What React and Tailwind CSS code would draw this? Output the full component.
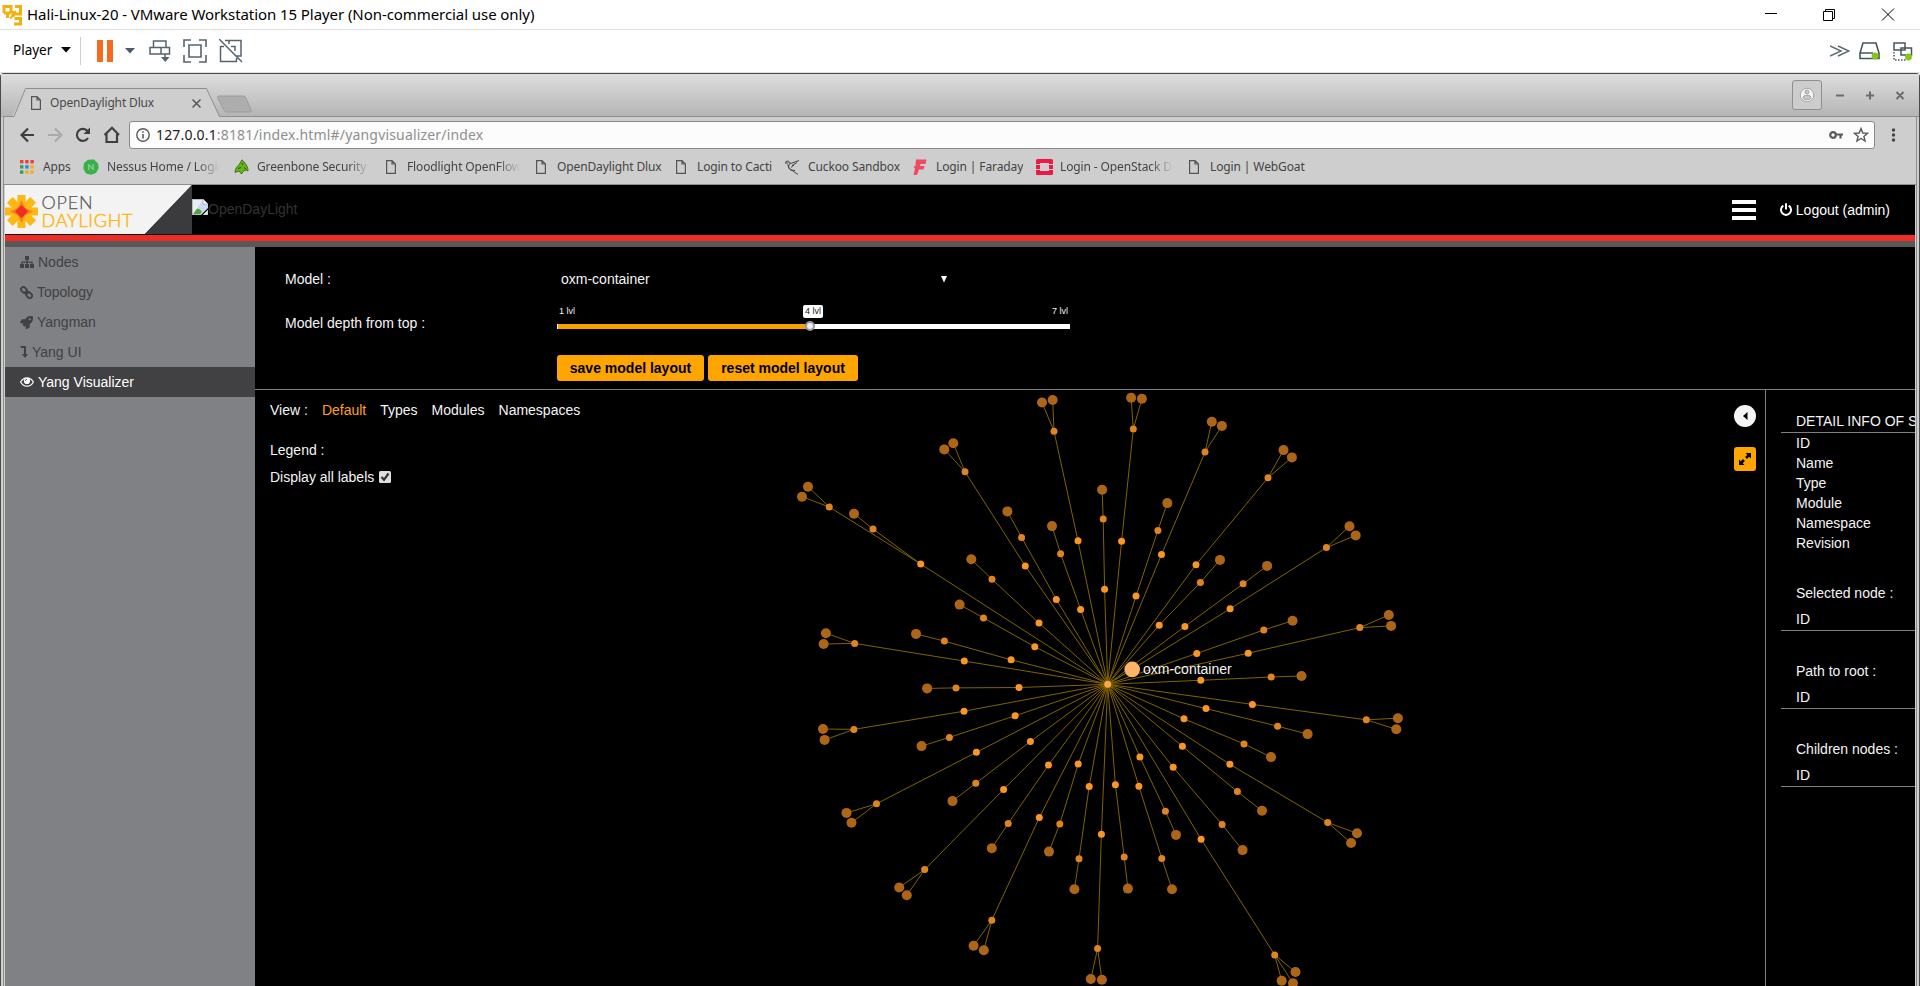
import React from "react";
import { FaRocket } from "react-icons/fa";

const ROOT = [1107.7, 684.3];

/* Each branch: first node, then sub-branches of [node, ...leaves]. */
const BRANCHES = [
  [[920.7, 564], [[829.3, 507], [808, 486.7], [802, 496.7]], [[873, 529], [854, 513.7]]],
  [[1025.3, 566], [[965, 471.8], [953.3, 443.3], [944.3, 449.4]]],
  [[1056.3, 599.4], [[1021.6, 537.4], [1007.4, 511.4]]],
  [[1039, 623], [[992, 579.3], [971.3, 559.3]]],
  [[1034.8, 646.7], [[983.5, 617.9], [959.6, 604.6]]],
  [[1011.1, 659.8], [[944.4, 641.1], [916, 633.9]]],
  [[964.3, 661.1], [[854.7, 643.4], [825.9, 633.2], [823.6, 644]]],
  [[1080.6, 609.4], [[1060.6, 553.8], [1052, 526.1]]],
  [[1078, 540.8], [[1054, 431.2], [1042, 402.5], [1052.7, 400]]],
  [[1104.6, 589.3], [[1103.2, 519.1], [1102.1, 489.8]]],
  [[1121.6, 541.2], [[1133.3, 429.1], [1131.1, 397.8], [1141.9, 398.8]]],
  [[1136, 596.1], [[1157.9, 530.4], [1167.3, 503.1]]],
  [[1161.5, 554.6], [[1205, 452.1], [1211.8, 421.7], [1221.9, 425.9]]],
  [[1196, 564.7], [[1268, 477.8], [1283.5, 450.1], [1291.9, 457.4]]],
  [[1159.2, 625.2], [[1200.4, 582.5], [1220, 559.9]]],
  [[1184.9, 626.4], [[1243.1, 583.8], [1267.1, 565.9]]],
  [[1230.1, 608.8], [[1326.4, 547.6], [1349.5, 526.2], [1355.7, 535.4]]],
  [[1196.8, 653.4], [[1263.8, 630], [1292.6, 620.7]]],
  [[1248.2, 653.2], [[1359.8, 627.6], [1388.8, 615], [1391.1, 625.9]]],
  [[1200.8, 680.3], [[1271.2, 677], [1301.5, 676]]],
  [[1252.4, 704.4], [[1366.3, 719.8], [1397.9, 718.2], [1396.3, 729.3]]],
  [[1206, 708.6], [[1277.6, 726.2], [1307.6, 734.1]]],
  [[1184, 718.8], [[1244, 743.9], [1271, 757.1]]],
  [[1182.4, 746.3], [[1237.4, 791.6], [1262, 810.8]]],
  [[1229.9, 764.3], [[1327.7, 822.5], [1357, 833.3], [1351.1, 843]]],
  [[1173.2, 767.3], [[1222.1, 824.5], [1242.6, 850.1]]],
  [[1139.9, 757], [[1165.4, 811.2], [1176, 834.9]]],
  [[1138.9, 786.3], [[1161.8, 858.4], [1172, 889.3]]],
  [[1201.1, 839.2], [[1274.7, 954.9], [1295.5, 972], [1281.7, 980.8], [1293, 983.2]]],
  [[1115.4, 784.7], [[1124.2, 857], [1127.9, 888.6]]],
  [[1019, 687.5], [[956, 687.9], [927.1, 688.4]]],
  [[964, 711.2], [[853.9, 729.4], [823, 729], [824.6, 739.9]]],
  [[1015.1, 715.8], [[949.4, 737.4], [921.5, 746.1]]],
  [[976.4, 752.3], [[876.5, 803.8], [846.5, 812.9], [851.5, 822.7]]],
  [[1030.4, 741.5], [[975.8, 783.2], [952.5, 801.1]]],
  [[1003.6, 789.4], [[924.7, 869.6], [899.2, 887.5], [906.8, 895.3]]],
  [[1048.5, 765.1], [[1008.2, 823.4], [991.8, 848.2]]],
  [[1039.3, 817.6], [[991.8, 920.2], [973.6, 945.8], [983.8, 950.2]]],
  [[1078.2, 764.1], [[1059.8, 823.9], [1049, 851.6]]],
  [[1089.2, 786.4], [[1079, 858.8], [1074.4, 889.3]]],
  [[1101.4, 834.2], [[1097.6, 948.6], [1090.8, 979], [1101.9, 979.7]]],
];

const edges = [[ROOT, [1132.2, 669.4]]];
const firsts = [];
const seconds = [];
const leaves = [];
BRANCHES.forEach(([first, ...subs]) => {
  edges.push([ROOT, first]);
  firsts.push(first);
  subs.forEach(([second, ...ends]) => {
    edges.push([first, second]);
    seconds.push(second);
    ends.forEach((end) => {
      edges.push([second, end]);
      leaves.push(end);
    });
  });
});

function Graph() {
  return (
    <svg className="absolute inset-0 h-full w-full" viewBox="255 390 1510 596" preserveAspectRatio="xMinYMin slice">
      {edges.map(([a, b], i) => (
        <line key={i} x1={a[0]} y1={a[1]} x2={b[0]} y2={b[1]} stroke="#7f6300" strokeWidth="1" />
      ))}
      {leaves.map((p, i) => <circle key={i} cx={p[0]} cy={p[1]} r="5" fill="#ad6618" />)}
      {seconds.map((p, i) => <circle key={i} cx={p[0]} cy={p[1]} r="3.5" fill="#e08420" />)}
      {firsts.map((p, i) => <circle key={i} cx={p[0]} cy={p[1]} r="3.5" fill="#fb9524" />)}
      <circle cx={ROOT[0]} cy={ROOT[1]} r="3.5" fill="#fca54a" />
      <circle cx="1132.2" cy="669.4" r="7.8" fill="#fbb467" />
      <text x="1143" y="674" fontSize="14" fill="#f4f4f4" fontFamily="Liberation Sans, sans-serif">oxm-container</text>
    </svg>
  );
}

const pageIcon = (
  <svg className="block" width="10" height="14" viewBox="0 0 10 14" fill="none" stroke="#555" strokeWidth="1.2"><path d="M.6.6H6L9.400 4V13.400H.6ZM6 .6V4H9.400" /></svg>
);
const appsIcon = (
  <svg width="14" height="14" viewBox="0 0 14 14">
    {["#ea4335", "#ea4335", "#ea4335", "#34a05a", "#1a8cff", "#fbab18", "#34a05a", "#fbab18", "#fbab18"].map((c, i) => (
      <rect key={i} x={(i % 3) * 5.2} y={Math.floor(i / 3) * 5.2} width="3.4" height="3.4" fill={c} />
    ))}
  </svg>
);
const nessusIcon = (
  <svg width="16" height="16" viewBox="0 0 16 16">
    <path d="M5 .8 11 .4 15 4.500 15.700 9 13 14 8 15.700 3 14.500.3 9.500 1 4Z" fill="#3bb04a" />
    <path d="M5.800 11V5.500L10 10.700V5" fill="none" stroke="#9fdca6" strokeWidth="1" />
  </svg>
);
const greenboneIcon = (
  <svg width="15" height="16" viewBox="0 0 15 16">
    <path d="M8 .8C10.500 3 14.500 8 14 12 12 10.500 10 11 7.500 15L5 12 1 13.500C.8 9 4 7 5.500 5Z" fill="#66b512" stroke="#375b12" strokeWidth=".8" />
    <path d="M8 4 9 6M4 9.500 7 8.500M10 8.500 12 10" stroke="#264010" strokeWidth=".9" />
  </svg>
);
const cuckooIcon = (
  <svg width="16" height="16" viewBox="0 0 16 16" fill="none" stroke="#444">
    <path d="M1 3.500C3 1.500 5 1.500 6.500 4.500L15 1.500M1 4 4 4M6.500 4.500C4 6.500 4 9 6.500 11L11 11.500M4 6C4 9 6 10 9 12L14 15.500M8 6.500 13 3.500M7 8.500 10 6" strokeWidth="1" />
    <path d="M3 2.500 6 4.500 3.500 5.500Z" fill="#fff" strokeWidth=".6" />
  </svg>
);
const faradayIcon = (
  <svg width="14" height="17" viewBox="0 0 14 17"><path d="M3 .5H13.500L12.500 5H7.500L7 7H11.500L10.500 10.500H6L4 16H.5L2 9.500.5 8 2.500 6.500Z" fill="#ef4a60" /></svg>
);
const openstackIcon = (
  <svg width="17" height="16" viewBox="0 0 17 16" fill="#ed1944"><path d="M1.500 0H15.500Q17 0 17 1.500V5H13V4H4V5H0V1.500Q0 0 1.500 0ZM0 6H4V10H0ZM13 6H17V10H13ZM0 11H4V12H13V11H17V14.500Q17 16 15.500 16H1.500Q0 16 0 14.500Z" /></svg>
);

const BOOKMARKS = [
  { icon: appsIcon, label: "Apps", box: "w-[64px]" },
  { icon: nessusIcon, label: "Nessus Home / Login", box: "w-[150px]", fade: true },
  { icon: greenboneIcon, label: "Greenbone Security", box: "w-[150px]", fade: true },
  { icon: pageIcon, label: "Floodlight OpenFlow", box: "w-[150px]", fade: true },
  { icon: pageIcon, label: "OpenDaylight Dlux", box: "w-[140px]" },
  { icon: pageIcon, label: "Login to Cacti", box: "w-[111px]" },
  { icon: cuckooIcon, label: "Cuckoo Sandbox", box: "w-[128px]" },
  { icon: faradayIcon, label: "Login | Faraday", box: "w-[124px]" },
  { icon: openstackIcon, label: "Login - OpenStack D", box: "w-[150px]", fade: true },
  { icon: pageIcon, label: "Login | WebGoat", box: "w-[130px]" },
];

function HostBars() {
  return (
    <>
      <div className="flex h-[29px] shrink-0 items-center bg-white pb-[2px] pl-[2px]">
        <svg className="mt-[2px]" width="21" height="22" viewBox="0 0 21 22" fill="none" stroke="#efb210" strokeWidth="3">
          <path d="M2 9V2.500H9V9M2 9H9M5.500 9V14M13 2.500H18.500V10H11M11 7V13M12 20H18.500V14.500H12.500" />
          <path d="M8 14.500 12 10.500M14 7 11 10" strokeWidth="2" />
        </svg>
        <span className="ml-[4px] whitespace-pre font-['Noto_Sans'] text-[15px] leading-[22px] tracking-[-0.07px] text-black">Hali-Linux-20 - VMware Workstation 15 Player (Non-commercial use only)</span>
        <svg className="ml-auto mr-[25px]" width="130" height="14" viewBox="0 0 130 14" fill="none" stroke="#000" strokeWidth="1">
          <path d="M0 6.500H12M58.500 4.500H67.500V13.500H58.500ZM60.500 4.500V2.500H69.500V11.500H67.500M117 1.500 129 13.500M129 1.500 117 13.500" />
        </svg>
      </div>
      <div className="flex h-[44px] shrink-0 items-center border-y border-[#e0e0e0] bg-white pl-[13px] pr-[7px]">
        <span className="w-[41px] pb-[2px] font-['Noto_Sans'] text-[13.5px] text-black">Player</span>
        <svg className="mb-[2px] ml-[7px]" width="10" height="6"><path d="M0 0H10L5 5.500Z" fill="#000" /></svg>
        <span className="ml-[9px] h-[28px] w-px bg-[#cfcfcf]" />
        <span className="ml-[16px] h-[22px] w-[6px] bg-[#f66a20]" />
        <span className="ml-[4px] h-[22px] w-[6px] bg-[#f66a20]" />
        <svg className="ml-[12px]" width="10" height="6"><path d="M0 0H10L5 5.500Z" fill="#4b5b67" /></svg>
        <svg className="ml-[14px]" width="22" height="23" viewBox="0 0 22 23" fill="none" stroke="#566470" strokeWidth="1.500">
          <path d="M4.500 1H17V7.500H4.500ZM1 7.500H12V14H1ZM12 7.500H20.500V14H12ZM16 14V20" /><path d="M12 17H20.500L16.300 22Z" fill="#566470" stroke="none" />
        </svg>
        <svg className="ml-[12px]" width="24" height="24" viewBox="0 0 24 24" fill="none" stroke="#566470" strokeWidth="1.600">
          <path d="M1 8V1H8M16 1H23V8M23 16V23H16M8 23H1V16M6 6H18V18H6Z" />
        </svg>
        <svg className="ml-[12px]" width="24" height="24" viewBox="0 0 24 24" fill="none" stroke="#566470" strokeWidth="1.500">
          <path d="M6 1.500H22V17H17M10 1.500V5M1.500 7V22.500H17.500V19M1.500 7.500H5M12 7.500H16V12M0 0 23 23" />
        </svg>
        <svg className="ml-auto" width="20" height="12" viewBox="0 0 20 12" fill="none" stroke="#5c6870" strokeWidth="1.400">
          <path d="M0 1 11 6 0 11M8 1 19 6 8 11" />
        </svg>
        <svg className="ml-[9px]" width="22" height="18" viewBox="0 0 22 18" fill="none" stroke="#47555f" strokeWidth="1.600">
          <path d="M4 1H17L20 11V16.500H1V11ZM1 11H14" /><circle cx="16" cy="14" r="3.400" fill="#84c618" stroke="none" />
        </svg>
        <svg className="ml-[12px]" width="20" height="19" viewBox="0 0 20 19" fill="none" stroke="#47555f" strokeWidth="1.500">
          <path d="M1 1H12V8H1ZM8 6H18.500V13H8Z" fill="#fff" /><path d="M1 10V18H13" strokeDasharray="1.500 1.500" /><circle cx="15.500" cy="15" r="3.400" fill="#84c618" stroke="none" />
        </svg>
      </div>
    </>
  );
}

function TabStrip() {
  return (
    <div className="flex h-[43px] shrink-0 items-end bg-linear-to-b from-[#dedede] to-[#b4b4b4] pl-[2px]">
      <div className="relative h-[29px] w-[256px]">
        <svg className="absolute inset-0" width="256" height="29" viewBox="0 0 256 29">
          <path d="M9 28.500 21.500 3Q22.500.5 25 .5H201Q203.500.5 205 3L216.500 28.500V29H8Z" fill="#cecece" />
          <path d="M0 28.500H11L22.500 .5H203.500L216.500 28.500H256" fill="none" stroke="#8e8e8e" />
          <path d="M215 8H240.500Q242 8 243 10L248 22Q248.500 24 247 24H223.500Q222 24 221 22L214.500 9.500Z" fill="#adadad" stroke="#9c9c9c" />
          <path d="M189.500 11.500 197.500 19.500M197.500 11.500 189.500 19.500" stroke="#555" strokeWidth="1.500" />
        </svg>
        <div className="relative flex h-[29px] items-center gap-[9px] pl-[28px] pt-[1px]">
          {pageIcon}
          <span className="font-['Noto_Sans'] text-[12px] tracking-[-0.15px] text-[#4a4a4a]">OpenDaylight Dlux</span>
        </div>
      </div>
      <div className="flex h-[43px] flex-1 items-center justify-end border-b border-[#8e8e8e] pr-[13px]">
        <span className="flex h-[30px] w-[30px] items-center justify-center rounded-[3px] border border-[#8f8f8f] bg-[#cdcdcd]">
          <svg width="16" height="16" viewBox="0 0 16 16"><circle cx="8" cy="8" r="6.800" fill="#f3f3f3" stroke="#a5a5a5" /><circle cx="8" cy="5" r="2" fill="#c8c8c8" stroke="#999" strokeWidth=".8" /><ellipse cx="8" cy="10.500" rx="4" ry="2.200" fill="#c8c8c8" stroke="#999" strokeWidth=".8" /></svg>
        </span>
        <svg className="ml-[14px]" width="70" height="12" viewBox="0 0 70 12" fill="none" stroke="#6c6c6c" strokeWidth="2">
          <path d="M0 6.500H8M30 6.500H38M34 2.500V10.500M60.500 3 67.500 10M67.500 3 60.500 10" />
        </svg>
      </div>
    </div>
  );
}

function Toolbar() {
  return (
    <div className="flex h-[36px] shrink-0 items-center bg-[#cecece] pl-[16px] pr-[20px]">
      <svg width="100" height="18" viewBox="0 0 100 18" fill="none" stroke="#3f3f3f" strokeWidth="2.200">
        <path d="M14 9H2M8 2.500 1.500 9 8 15.500" />
        <path d="M28 9H41M35 2.500 41.500 9 35 15.500" stroke="#aaa" />
        <path d="M68 12A6 6 0 1 1 67.500 5" /><path d="M70 1.500V8H63.500Z" fill="#3f3f3f" stroke="none" />
        <path d="M84.500 9 92 1.800 99 9M86.500 8V16H97V8" />
      </svg>
      <div className="ml-[9px] flex h-[28px] flex-1 items-center rounded-[3px] border border-[#8a8a8a] bg-[#fcfcfc] pl-[6px] pr-[5px]">
        <svg width="14" height="14" viewBox="0 0 14 14" fill="none" stroke="#5a5a5a"><circle cx="7" cy="7" r="6.200" strokeWidth="1.400" /><path d="M7 6V10.500M7 3.300V4.800" strokeWidth="1.600" /></svg>
        <span className="ml-[6px] font-['Noto_Sans'] text-[14px] leading-[20px] tracking-[0.17px] text-[#8f8f8f]"><span className="text-[#222]">127.0.0.1</span>:8181/index.html#/yangvisualizer/index</span>
        <svg className="ml-auto" width="14" height="8" viewBox="0 0 14 8" fill="none" stroke="#5a5a5a"><circle cx="4" cy="4" r="2.800" strokeWidth="2.200" /><path d="M7 3.500H14M11.500 4V7.500" strokeWidth="2.200" /></svg>
        <svg className="ml-[10px]" width="16" height="16" viewBox="0 0 16 16"><path d="M8 1.500 9.800 6 14.600 6.300 10.900 9.400 12.100 14 8 11.500 3.900 14 5.100 9.400 1.400 6.300 6.200 6Z" fill="none" stroke="#5a5a5a" strokeWidth="1.400" /></svg>
      </div>
      <svg className="ml-[16px]" width="5" height="14" viewBox="0 0 5 14" fill="#444"><circle cx="2.500" cy="2" r="1.700" /><circle cx="2.500" cy="7" r="1.700" /><circle cx="2.500" cy="12" r="1.700" /></svg>
    </div>
  );
}

function Bookmarks() {
  return (
    <div className="flex h-[32px] shrink-0 items-center border-b border-[#8e8e8e] bg-[#cecece] pb-[3px] pl-[12px]">
      {BOOKMARKS.map((b) => (
        <div key={b.label} className={"flex shrink-0 items-center " + b.box}>
          <span className="flex w-[22px] shrink-0 justify-center">{b.icon}</span>
          <span className={"ml-[5px] overflow-hidden whitespace-nowrap font-['Noto_Sans'] text-[12px] leading-[18px] tracking-[-0.12px] text-[#444] " + (b.fade ? "w-[113px] [mask-image:linear-gradient(to_right,black_80%,transparent)]" : "")}>{b.label}</span>
        </div>
      ))}
    </div>
  );
}

function AppHeader() {
  return (
    <div className="flex h-[50px] shrink-0 items-center bg-black pb-[1px]">
      <svg className="shrink-0" width="187" height="49" viewBox="0 0 187 49">
        <path d="M0 0H187L140 49H0Z" fill="#f3f3f3" />
        <path d="M187 0V49H140Z" fill="#3b3b3d" />
        <g stroke="#fdb813" strokeWidth="8"><path d="M16.500 10V43M0 26.500H33M4.800 14.800 28.200 38.200M28.200 14.800 4.800 38.200" /></g>
        <path d="M16.500 15 20 22.500 28 26.500 20 30.500 16.500 38 13 30.500 5 26.500 13 22.500Z" fill="#f58220" />
        <path d="M16.500 20 23 26.500 16.500 33 10 26.500Z" fill="#ee2e24" />
        <text x="36.500" y="24" textLength="51" fontSize="18" fill="#58595b" stroke="#58595b" strokeWidth=".25" fontFamily="Lato, sans-serif" fontWeight="300">OPEN</text>
        <text x="36.500" y="42" textLength="91" fontSize="18" fill="#fdb813" stroke="#fdb813" strokeWidth=".5" fontFamily="Lato, sans-serif" fontWeight="300">DAYLIGHT</text>
      </svg>
      <svg className="mt-[14px] shrink-0 self-start" width="16" height="16" viewBox="0 0 16 16">
        <path d="M0 0H11L16 5V9L9 16H0Z" fill="#c9d8f5" /><path d="M11 0V5H16Z" fill="#fff" stroke="#999" strokeWidth=".6" />
        <path d="M0 15C3 9 7 8 10 13L8 15Z" fill="#4ea832" /><path d="M3 5Q5 2 7 5Z" fill="#fff" /><path d="M.5 16V.5H11M0 15.500H9M16 11V16H11Z" fill="#e8eef8" stroke="#bbb" />
      </svg>
      <span className="pb-[2px] text-[#333]">OpenDayLight</span>
      <div className="ml-auto mr-[24px] flex h-[20px] w-[24px] flex-col justify-between">
        <span className="h-[4px] bg-white" /><span className="h-[4px] bg-white" /><span className="h-[4px] bg-white" />
      </div>
      <div className="mr-[25px] flex items-center gap-[4px] text-white">
        <svg width="12" height="13" viewBox="0 0 12 13" fill="none" stroke="#fff" strokeWidth="2"><path d="M3.300 2.700A5 5 0 1 0 8.700 2.700M6 .3V6.500" /></svg>
        <span>Logout (admin)</span>
      </div>
    </div>
  );
}

const NAV = [
  ["Nodes", <svg key="n" width="14" height="12" viewBox="0 0 14 12" fill="currentColor"><path d="M5 0H9V4H7.600V5.500H12.600V8H14V12H10V8H11.400V6.700H7.600V8H9V12H5V8H6.400V6.700H2.600V8H4V12H0V8H1.400V5.500H6.400V4H5Z" /></svg>],
  ["Topology", <svg key="t" width="13" height="13" viewBox="0 0 13 13" fill="none" stroke="currentColor" strokeWidth="1.900"><rect x="-3" y="-2.300" width="6.200" height="4.600" rx="2" transform="translate(3.900 3.900) rotate(45)" /><rect x="-3" y="-2.300" width="6.200" height="4.600" rx="2" transform="translate(9.100 9.100) rotate(45)" /><path d="M5 5 8 8" /></svg>],
  ["Yangman", <FaRocket key="r" size={13} />],
  ["Yang UI", <svg key="u" width="8" height="12" viewBox="0 0 8 12" fill="currentColor"><path d="M0 0H5Q6 0 6 1V8H8L5 12 2 8H4V2H1.500Z" /></svg>],
  ["Yang Visualizer", <svg key="v" width="14" height="10" viewBox="0 0 14 10" fill="none" stroke="currentColor"><path d="M.6 5Q3 .8 7 .8T13.400 5Q11 9.200 7 9.200T.6 5Z" strokeWidth="1.200" /><circle cx="7" cy="4" r="3.100" fill="currentColor" stroke="none" /><path d="M5.400 3.800Q5.400 2.400 7 2.300" stroke="#414042" strokeWidth=".8" /></svg>],
];

function Sidebar() {
  return (
    <nav className="w-[250px] shrink-0 bg-[#808184]">
      {NAV.map(([label, icon], i) => (
        <div key={label} className={"flex h-[30px] items-center gap-[4px] pl-[15px] " + (i === 4 ? "bg-[#414042] text-white" : "text-[#414042]")}>
          {icon}<span>{label}</span>
        </div>
      ))}
    </nav>
  );
}

function Controls() {
  return (
    <div className="flex h-[143px] shrink-0 border-b border-[#808080] pl-[30px]">
      <div className="w-[272px] pt-[22px] leading-[20px]">
        <div>Model :</div>
        <div className="mt-[24px]">Model depth from top :</div>
      </div>
      <div className="w-[513px] pt-[22px]">
        <div className="flex items-center pl-[4px] leading-[20px]">
          <span>oxm-container</span>
          <svg className="ml-auto mr-[123px]" width="6" height="7"><path d="M0 0H6L3 6.500Z" fill="#fff" /></svg>
        </div>
        <div className="mt-[16px] flex h-[13px] items-center px-[2px] text-[9px] leading-[13px]">
          <span className="w-[20px]">1 lvl</span>
          <span className="ml-[224px] w-[20px] rounded-[2px] bg-white text-center text-[#222]">4 lvl</span>
          <span className="ml-auto">7 lvl</span>
        </div>
        <div className="relative mt-[6px] h-[5px] border-l border-white bg-linear-to-r from-[#f8a000] from-[253px] to-white to-[253px]">
          <span className="absolute left-[247px] top-[-3px] h-[10px] w-[10px] rounded-full border-2 border-[#96969c] bg-[#eee]" />
        </div>
        <div className="mt-[26px] flex gap-[4px] font-bold text-black">
          <span className="flex h-[26px] w-[147px] items-center justify-center rounded-[3px] bg-[#ffa500]">save model layout</span>
          <span className="flex h-[26px] w-[150px] items-center justify-center rounded-[3px] bg-[#ffa500]">reset model layout</span>
        </div>
      </div>
    </div>
  );
}

function Canvas() {
  return (
    <div className="relative flex-1 overflow-hidden">
      <Graph />
      <div className="relative flex justify-between pl-[15px] pr-[9px]">
        <div className="pt-[10px] leading-[20px]">
          <div className="flex gap-[14px]">
            <span>View :</span><span className="text-[#ffa010]">Default</span><span>Types</span><span>Modules</span><span>Namespaces</span>
          </div>
          <div className="mt-[20px]">Legend :</div>
          <div className="mt-[7px] flex items-center gap-[5px]">
            <span>Display all labels</span>
            <svg width="12" height="12" viewBox="0 0 12 12"><rect width="12" height="12" rx="1.500" fill="#dedede" /><path d="M2.500 6 5 8.800 9.500 2.500" fill="none" stroke="#333" strokeWidth="2.200" /></svg>
          </div>
        </div>
        <div className="pt-[15px]">
          <svg className="block" width="22" height="22" viewBox="0 0 22 22"><circle cx="11" cy="11" r="11" fill="#f5f5f7" /><path d="M13.500 7V15L9 11Z" fill="#000" /></svg>
          <svg className="mt-[20px] block" width="22" height="24" viewBox="0 0 22 24"><rect width="22" height="24" rx="3" fill="#ffa500" /><path d="M11.500 6H17V11.500L15.200 9.700 13 11.900 11.100 10 13.300 7.800ZM10.500 18H5V12.500L6.800 14.300 9 12.100 10.900 14 8.700 16.200Z" fill="#000" /></svg>
        </div>
      </div>
    </div>
  );
}

function Details() {
  return (
    <aside className="w-[150px] shrink-0 overflow-hidden whitespace-nowrap border-l border-[#808080] pl-[15px] leading-[20px]">
      <div className="h-[43px] border-b border-[#808080] pl-[15px] pt-[21px]">DETAIL INFO OF SELECTED NODE</div>
      <div className="pl-[15px]">
        {["ID", "Name", "Type", "Module", "Namespace", "Revision"].map((t) => <div key={t}>{t}</div>)}
      </div>
      {["Selected node :", "Path to root :", "Children nodes :"].map((t) => (
        <div key={t} className="h-[78px] border-b border-[#808080] pl-[15px] pt-[30px]">
          <div>{t}</div><div className="mt-[6px]">ID</div>
        </div>
      ))}
    </aside>
  );
}

export default function App() {
  return (
    <div className="flex h-[986px] w-[1920px] flex-col overflow-hidden bg-white">
      <HostBars />
      <div className="flex min-h-0 flex-1 flex-col rounded-t-[4px] border-x border-t border-[#4a4a4a] bg-[#cecece]">
        <TabStrip />
        <div className="mx-[2px] flex min-h-0 flex-1 flex-col border-x border-[#8e8e8e] bg-[#cecece]">
          <Toolbar />
          <Bookmarks />
          <div className="mx-px flex min-h-0 flex-1 flex-col bg-black font-['Liberation_Sans',Arial,sans-serif] text-[14px] leading-[20px] text-[#f4f4f4]">
            <AppHeader />
            <div className="h-[6px] shrink-0 bg-[#ee2e24]" />
            <div className="h-[6px] shrink-0 bg-[#58585a]" />
            <div className="flex min-h-0 flex-1">
              <Sidebar />
              <div className="flex min-w-0 flex-1 flex-col">
                <Controls />
                <div className="flex min-h-0 flex-1"><Canvas /><Details /></div>
              </div>
            </div>
          </div>
        </div>
      </div>
    </div>
  );
}
